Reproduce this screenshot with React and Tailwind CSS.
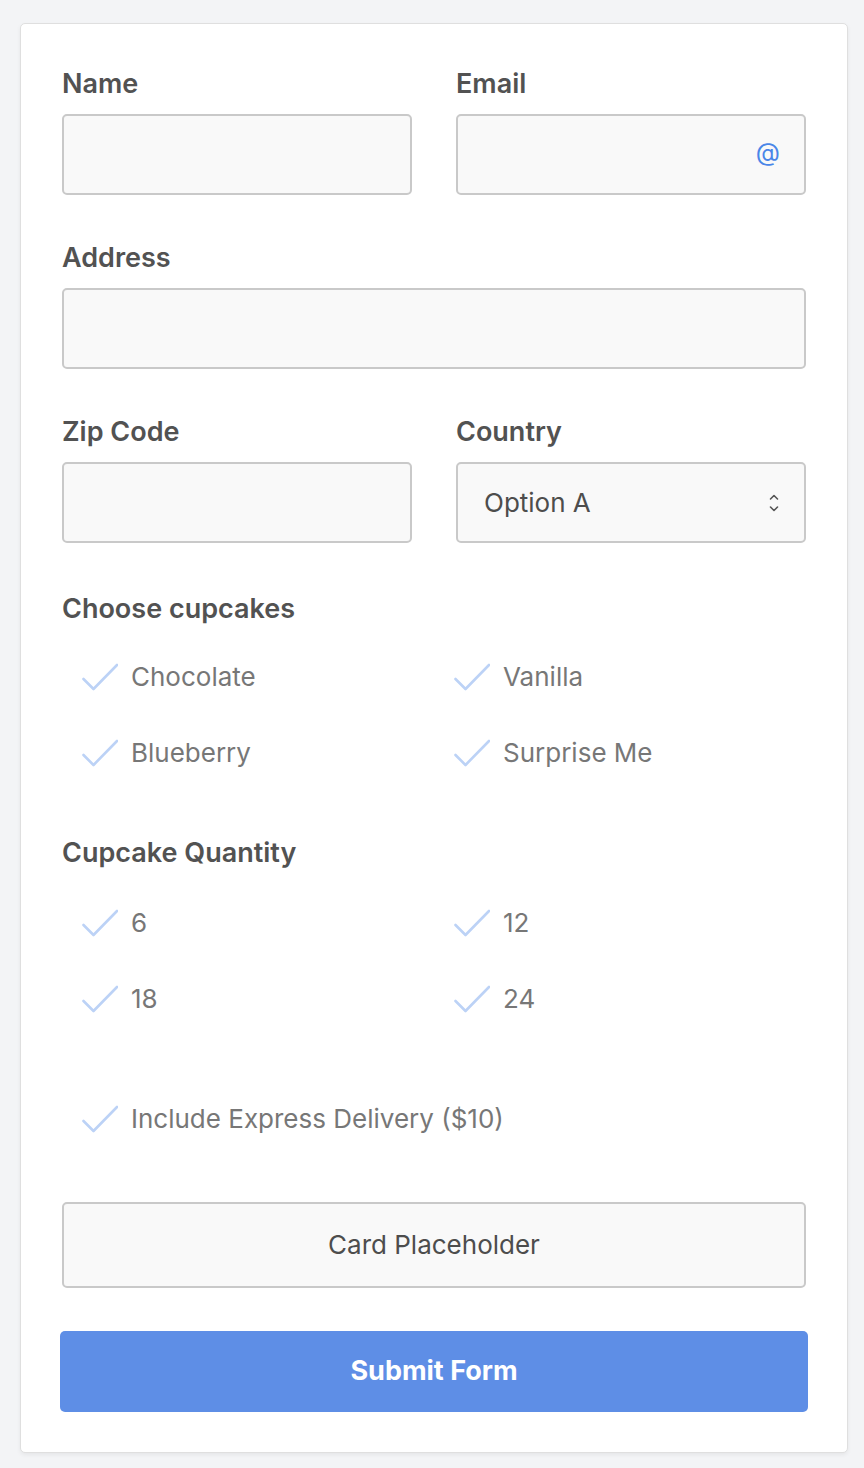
import React from "react";

const Check = () => (
  <svg width="36" height="28" viewBox="0 0 36 28" fill="none" className="shrink-0">
    <path d="M1.5 16 L11.5 26 L35 2" stroke="#bcd2f6" strokeWidth="2.6" strokeLinecap="round" strokeLinejoin="round" />
  </svg>
);

const Option = ({ label }) => (
  <div className="flex items-center h-[30px] pl-5 gap-[13px]">
    <Check />
    <span className="text-[26px] leading-[30px] text-[#777777]">{label}</span>
  </div>
);

const Field = ({ label, children }) => (
  <div className="flex flex-col gap-[15px]">
    <label className="text-[27px] leading-[30px] font-semibold text-[#525252]">{label}</label>
    {children}
  </div>
);

const inputCls = "h-[81px] w-full rounded-[5px] border-2 border-[#c9c9c9] bg-[#f9f9f9]";

const App = () => {
  return (
    <div className="min-h-[1468px] bg-[#f3f4f6] pt-[23px] px-5" style={{ fontFamily: "Inter, 'Noto Sans', sans-serif" }}>
      <div className="w-[828px] rounded-[5px] border border-[#dfdfdf] bg-white shadow-[0_2px_4px_rgba(0,0,0,0.06)] px-[41px] pt-[45px] pb-[40px]">
        <div className="grid grid-cols-2 gap-x-[44px]">
          <Field label="Name">
            <div className={inputCls} />
          </Field>
          <Field label="Email">
            <div className={`${inputCls} flex items-center justify-end pr-[24px]`}>
              <span className="text-[25px] leading-none text-[#4a86e8] -mt-[4px]">@</span>
            </div>
          </Field>
        </div>

        <div className="mt-[48px]">
          <Field label="Address">
            <div className={inputCls} />
          </Field>
        </div>

        <div className="grid grid-cols-2 gap-x-[44px] mt-[48px]">
          <Field label="Zip Code">
            <div className={inputCls} />
          </Field>
          <Field label="Country">
            <div className={`${inputCls} flex items-center justify-between pl-[26px] pr-[24px]`}>
              <span className="text-[26px] leading-[30px] text-[#4d4d4d]">Option A</span>
              <svg width="12" height="22" viewBox="0 0 12 22" fill="none">
                <path d="M2.5 7 L6 3.5 L9.5 7" stroke="#555555" strokeWidth="1.6" strokeLinecap="round" strokeLinejoin="round" />
                <path d="M2.5 15 L6 18.5 L9.5 15" stroke="#555555" strokeWidth="1.6" strokeLinecap="round" strokeLinejoin="round" />
              </svg>
            </div>
          </Field>
        </div>

        <div className="mt-[51px]">
          <div className="text-[27px] leading-[30px] font-semibold text-[#525252]">Choose cupcakes</div>
          <div className="grid grid-cols-2 gap-y-[46px] mt-[38px]">
            <Option label="Chocolate" />
            <Option label="Vanilla" />
            <Option label="Blueberry" />
            <Option label="Surprise Me" />
          </div>
        </div>

        <div className="mt-[70px]">
          <div className="text-[27px] leading-[30px] font-semibold text-[#525252]">Cupcake Quantity</div>
          <div className="grid grid-cols-2 gap-y-[46px] mt-[40px]">
            <Option label="6" />
            <Option label="12" />
            <Option label="18" />
            <Option label="24" />
          </div>
        </div>

        <div className="mt-[90px]">
          <Option label="Include Express Delivery ($10)" />
        </div>

        <div className="mt-[68px] h-[86px] rounded-[5px] border-2 border-[#c9c9c9] bg-[#f9f9f9] flex items-center justify-center">
          <span className="text-[26px] leading-[30px] text-[#4d4d4d]">Card Placeholder</span>
        </div>

        <button className="mt-[43px] -mx-[2px] w-[calc(100%+4px)] h-[81px] rounded-[5px] bg-[#5e8ee6] text-white text-[27px] font-bold">
          Submit Form
        </button>
      </div>
    </div>
  );
};

export default App;
